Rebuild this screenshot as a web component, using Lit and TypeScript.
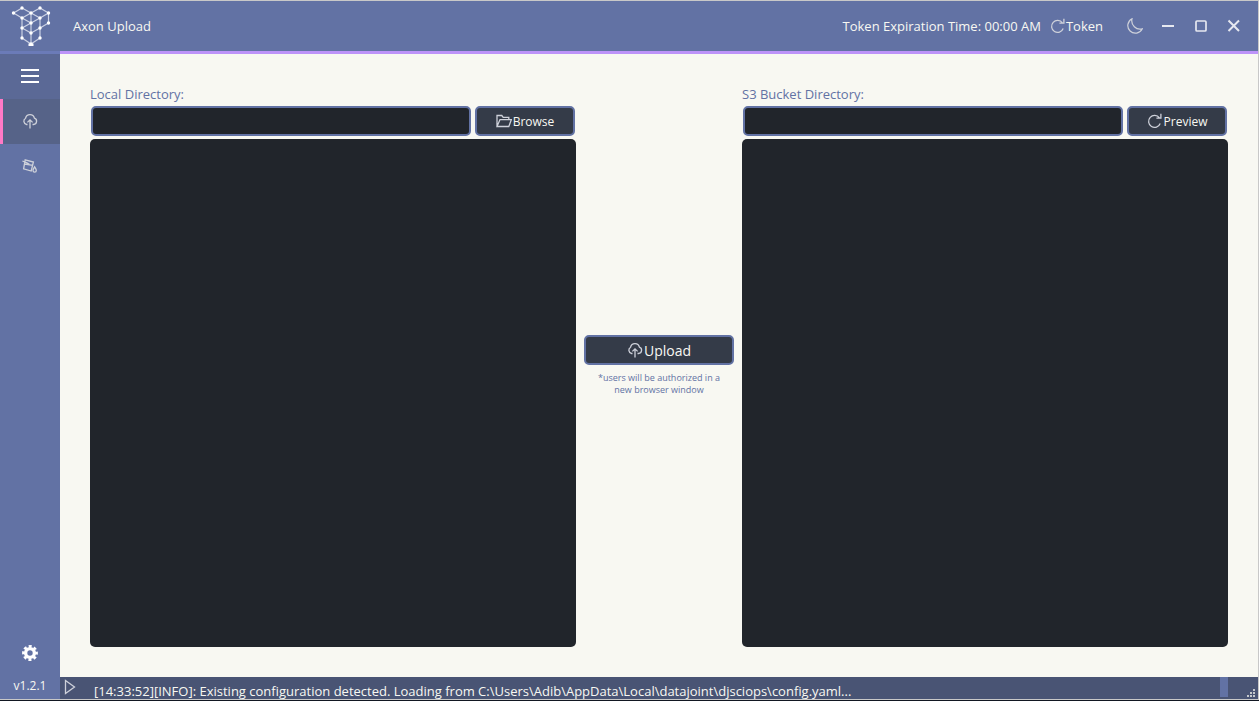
import { LitElement, html, css, svg } from "lit";
import { customElement, state } from "lit/decorators.js";

const NODES: Record<string, [number, number]> = {
  a: [22, 7], b: [40, 7], c: [13.5, 12], d: [31, 12], e: [48.5, 12],
  f: [22, 17], g: [40, 17], h: [31, 22], i: [48.5, 22], j: [22, 27],
  k: [40, 27], l: [31, 32], m: [22, 37], n: [40, 37], o: [31, 43],
};
const EDGES = "ca ad db be cf df dg ge fh gh ei ik dh hl lo fj jm mo gk kn no jl jh kl".split(" ");

const uploadIcon = svg`<path d="M5.5 11.5H4.6A3.4 3.4 0 0 1 3.6 5.2 4.5 4.5 0 0 1 12.4 5.1 3.3 3.3 0 0 1 11.5 11.5H10.5M8 15.5V7M5.4 9.4 8 6.8l2.6 2.6"/>`;
const reloadIcon = svg`<path d="M12.4 4.8A6 6 0 1 0 13.2 10.6M13.9 .8V5.2H9.4"/>`;
const icon = (body: unknown) => html`<svg class="icon" width="16" height="16" viewBox="0 0 16 16" aria-hidden="true">${body}</svg>`;

@customElement("app-root")
export class AppRoot extends LitElement {
  @state() private localPath = "";
  @state() private bucketPath = "";

  static styles = css`
    :host {
      display: flex;
      flex-direction: column;
      height: 100vh;
      box-sizing: border-box;
      border-top: 1px solid #c8c8c8;
      border-bottom: 1px solid #121722;
      font: 13px/18px "Open Sans", "Noto Sans", sans-serif;
      color: #f8f8f2;
      background: #f8f8f2;
    }
    * { box-sizing: border-box; }
    button {
      font: inherit;
      color: inherit;
      background: none;
      border: 0;
      padding: 0;
      display: flex;
      align-items: center;
      justify-content: center;
    }
    .icon {
      fill: none;
      stroke: #ced1da;
      stroke-width: 1.3;
      flex: none;
    }
    .window {
      flex: 1;
      min-height: 0;
      display: flex;
      flex-direction: column;
      border-right: 1px solid #c8c8c8;
      border-bottom: 1px solid #c8c8c8;
    }
    header {
      display: flex;
      height: 53px;
      flex: none;
      background: #6272a4;
    }
    .brand {
      width: 60px;
      border-bottom: 3px solid #6b7bb8;
    }
    .logo { display: block; stroke: #ccd2e4; stroke-width: 1.2; fill: #fff; }
    .bar {
      flex: 1;
      display: flex;
      align-items: center;
      padding: 0 8px 0 13px;
      border-bottom: 3px solid #bd93f9;
    }
    h1 { font: inherit; margin: 0; flex: 1; }
    .token { margin: 0 15px 0 9px; }
    .win { width: 33px; height: 32px; }
    .win .icon { stroke: #e6e8f0; stroke-width: 2; }
    .win .moon { stroke: #ced1da; stroke-width: 1.2; }
    .body { flex: 1; min-height: 0; display: flex; }
    nav {
      width: 60px;
      display: flex;
      flex-direction: column;
      background: #6272a4;
    }
    nav button { height: 45px; padding-bottom: 2px; }
    .menu { background: #5b6996; }
    .menu .icon { stroke: #fff; stroke-width: 2; }
    .active {
      background: #566388;
      border-left: 3px solid #ff79c6;
      padding-right: 3px;
    }
    .settings { margin-top: auto; }
    .version { text-align: center; padding: 1px 0 4px; font-size: 12px; }
    main { flex: 1; min-width: 0; display: flex; flex-direction: column; }
    .content {
      flex: 1;
      min-height: 0;
      display: grid;
      grid-template-columns: 1fr 150px 1fr;
      gap: 8px;
      padding: 31px 30px 30px;
    }
    .panel { display: flex; flex-direction: column; min-width: 0; }
    label { color: #6272a4; line-height: 18px; padding-bottom: 2px; }
    .row { display: flex; gap: 4px; padding: 1px 1px 3px; }
    input {
      flex: 1;
      min-width: 0;
      height: 30px;
      border: 2px solid #6272a4;
      border-radius: 5px;
      background: #21252b;
      color: inherit;
      font: inherit;
      padding: 0 10px;
    }
    .action {
      height: 30px;
      width: 100px;
      gap: 1px;
      border: 2px solid #6272a4;
      border-radius: 5px;
      background: #343b48;
      font-size: 12px;
    }
    .action span { padding-top: 2px; }
    .files { flex: 1; background: #21252b; border-radius: 5px; }
    .center {
      display: flex;
      flex-direction: column;
      justify-content: center;
      align-items: center;
      padding-bottom: 2px;
    }
    .center .action { width: 100%; font-size: 14px; }
    .note {
      margin: 7px 0 0;
      width: 126px;
      font-size: 9px;
      line-height: 12px;
      text-align: center;
      color: #6272a4;
    }
    footer {
      height: 22px;
      flex: none;
      display: flex;
      align-items: flex-start;
      background: #495474;
    }
    .run { width: 20px; height: 20px; }
    .log {
      flex: 1;
      min-width: 0;
      margin: 6px 0 0 14px;
      line-height: 16px;
      white-space: nowrap;
      overflow-x: clip;
    }
    .thumb { width: 8px; height: 20px; background: #6272a4; margin-right: 19px; }
    .grip { align-self: flex-end; fill: #c4c8cc; margin: 0 3px 2px 0; }
  `;

  private panel(id: string, title: string, value: string, onInput: (v: string) => void, glyph: unknown, action: string) {
    return html`<section class="panel">
      <label for=${id}>${title}</label>
      <div class="row">
        <input id=${id} type="text" .value=${value}
          @input=${(e: Event) => onInput((e.target as HTMLInputElement).value)} />
        <button class="action">${glyph}<span>${action}</span></button>
      </div>
      <div class="files"></div>
    </section>`;
  }

  render() {
    return html`<div class="window">
      <header>
        <div class="brand">
          <svg class="logo" width="60" height="50" viewBox="0 0 60 50" aria-hidden="true">
            ${EDGES.map((e) => {
              const [p, q] = [NODES[e[0]], NODES[e[1]]];
              return svg`<line x1=${p[0]} y1=${p[1]} x2=${q[0]} y2=${q[1]} />`;
            })}
            ${Object.values(NODES).map(([x, y]) => svg`<circle cx=${x} cy=${y} r="1.7" stroke="none" />`)}
            <rect x="28.5" y="42.5" width="5" height="2.5" stroke="none" />
          </svg>
        </div>
        <div class="bar">
          <h1>Axon Upload</h1>
          <span>Token Expiration Time: 00:00 AM</span>
          <button class="token">${icon(reloadIcon)}Token</button>
          <button class="win" aria-label="Toggle theme">
            <svg class="icon moon" width="16" height="16" viewBox="0 0 16 16"><path d="M5 .8A7.6 7.6 0 1 0 15.3 10.8 8.4 8.4 0 0 1 5 .8Z" /></svg>
          </button>
          <button class="win" aria-label="Minimize">${icon(svg`<path d="M2 8H14"/>`)}</button>
          <button class="win" aria-label="Maximize">${icon(svg`<rect x="3" y="3" width="10" height="10" rx="1" stroke-width="1.7"/>`)}</button>
          <button class="win" aria-label="Close">${icon(svg`<path d="M2.5 2.5 13 13M13 2.5 2.5 13"/>`)}</button>
        </div>
      </header>
      <div class="body">
        <nav>
          <button class="menu" aria-label="Menu">
            <svg class="icon" width="20" height="16" viewBox="0 0 20 16"><path d="M1 2H19M1 8H19M1 14H19" /></svg>
          </button>
          <button class="active" aria-label="Upload files">${icon(uploadIcon)}</button>
          <button aria-label="Clean up">
            ${icon(svg`<path d="M3.2 1.8 11.4 4 9.2 13 1.6 10.8ZM.4 3 4.6 4.6 7.4 6.2M2.6 6 10.8 7.4M12.6 8.8c.9 1.5 1.7 2.5 1.7 3.6a1.6 1.6 0 0 1-3.3 0c0-1.1.7-2.1 1.6-3.6Z"/>`)}
          </button>
          <button class="settings" aria-label="Settings">
            <svg width="16" height="16" viewBox="0 0 16 16" fill="none" stroke="#fff" aria-hidden="true">
              <circle cx="8" cy="8" r="4.4" stroke-width="3.4" />
              <circle cx="8" cy="8" r="6.6" stroke-width="2.6" stroke-dasharray="3 2.18" stroke-dashoffset="1.5" />
            </svg>
          </button>
          <div class="version">v1.2.1</div>
        </nav>
        <main>
          <div class="content">
            ${this.panel("local", "Local Directory:", this.localPath, (v) => (this.localPath = v),
              icon(svg`<path d="M1 13.5V2.5H5.8L7.2 4.4H12.8V6.6M1 13.5 4 6.6H15.4L12.8 13.5Z"/>`), "Browse")}
            <div class="center">
              <button class="action">${icon(uploadIcon)}<span>Upload</span></button>
              <p class="note">*users will be authorized in a new browser window</p>
            </div>
            ${this.panel("bucket", "S3 Bucket Directory:", this.bucketPath, (v) => (this.bucketPath = v),
              icon(reloadIcon), "Preview")}
          </div>
          <footer>
            <button class="run" aria-label="Expand log">
              <svg class="icon" width="12" height="16" viewBox="0 0 12 16"><path d="M1.5 1.5 10.5 8 1.5 14.5Z" /></svg>
            </button>
            <div class="log">[14:33:52][INFO]: Existing configuration detected. Loading from C:\\Users\\Adib\\AppData\\Local\\datajoint\\djsciops\\config.yaml...</div>
            <div class="thumb"></div>
            <svg class="grip" width="8" height="8" viewBox="0 0 8 8"><path d="M6 0h2v2H6zM3 3h2v2H3zM6 3h2v2H6zM0 6h2v2H0zM3 6h2v2H3zM6 6h2v2H6z" /></svg>
          </footer>
        </main>
      </div>
    </div>`;
  }
}
